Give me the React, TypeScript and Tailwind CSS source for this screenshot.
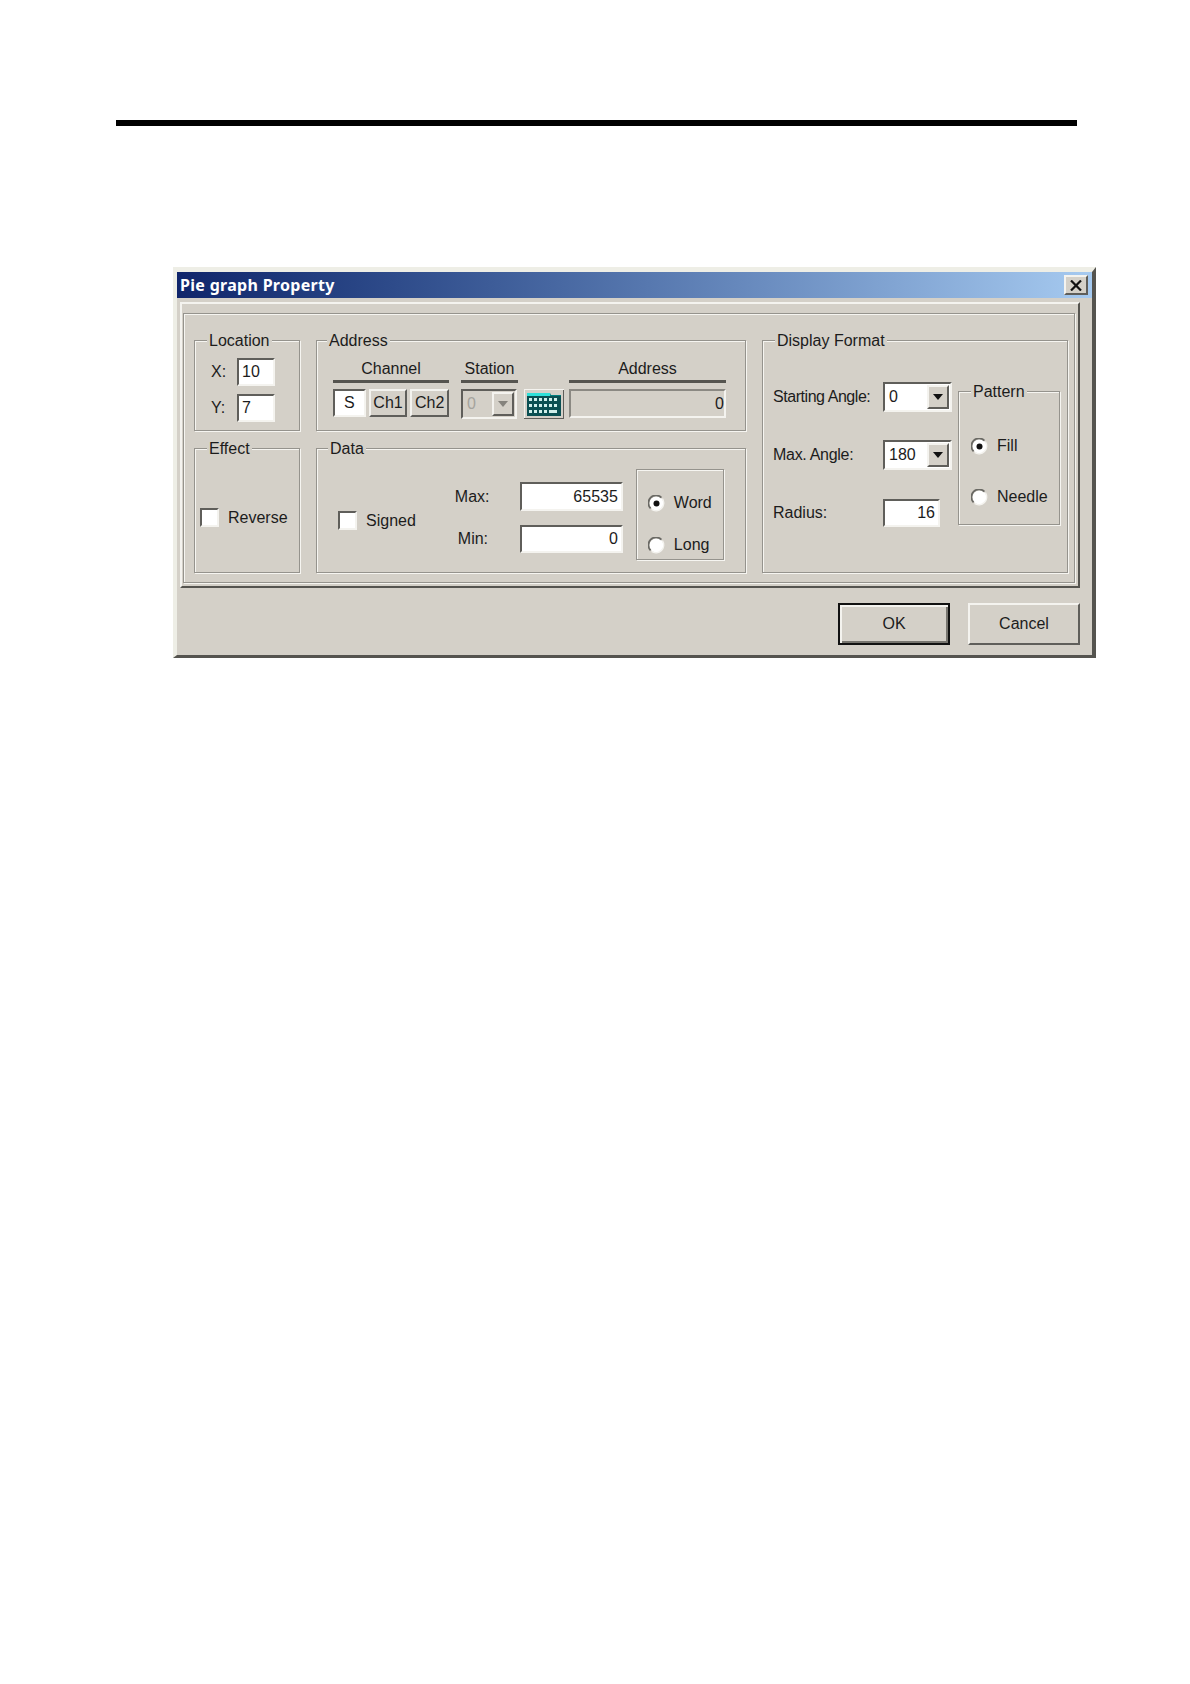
const font = "font-['Liberation_Sans',Arial,sans-serif]";
const sunken =
  'border-2 border-t-[#5f5e5a] border-l-[#5f5e5a] border-r-[#f4f3ef] border-b-[#f4f3ef] bg-white';
const etched = 'border border-[#95938d] shadow-[1px_1px_0_#f6f5f1,inset_1px_1px_0_#f6f5f1]';
const raised =
  'border-2 border-t-[#f4f3ef] border-l-[#f4f3ef] border-r-[#5f5e5a] border-b-[#5f5e5a] bg-[#d4d0c8]';

const Group = ({
  title,
  left = 12,
  className,
  children,
}: {
  title?: string;
  left?: number;
  className: string;
  children: React.ReactNode;
}) => (
  <div className={`relative ${etched} ${className}`}>
    {title && (
      <span
        className="absolute top-0 -translate-y-1/2 bg-[#d4d0c8] px-[2px] text-[16px] leading-[18px] whitespace-nowrap text-[#1c1c1c]"
        style={{ left }}
      >
        {title}
      </span>
    )}
    {children}
  </div>
);

const Field = ({ value, className, right }: { value: string; className: string; right?: boolean }) => (
  <div
    className={`${sunken} ${className} flex items-center px-[3px] text-[16px] text-[#1c1c1c] ${right ? 'justify-end' : ''}`}
  >
    {value}
  </div>
);

const Arrow = ({ disabled }: { disabled?: boolean }) => (
  <svg width="12" height="7" viewBox="0 0 12 7">
    <path d="M1 0h10L6 6z" fill={disabled ? '#85837d' : '#111'} />
  </svg>
);

const Combo = ({ value, width, disabled }: { value: string; width: string; disabled?: boolean }) => (
  <div
    className={`flex h-[30px] items-stretch border-2 border-t-[#5f5e5a] border-l-[#5f5e5a] border-r-[#f4f3ef] border-b-[#f4f3ef] ${width} ${disabled ? 'bg-[#d4d0c8]' : 'bg-white'}`}
  >
    <span className={`flex-1 pl-[4px] text-[16px] leading-[26px] ${disabled ? 'text-[#a5a39d]' : 'text-[#1c1c1c]'}`}>
      {value}
    </span>
    <span className={`${raised} my-[1px] mr-[1px] flex w-[22px] items-center justify-center`}>
      <Arrow disabled={disabled} />
    </span>
  </div>
);

const Check = ({ label, className }: { label: string; className: string }) => (
  <div className={`flex items-center gap-[9px] text-[16px] text-[#1c1c1c] ${className}`}>
    <span className={`${sunken} size-[19px]`} />
    {label}
  </div>
);

const Radio = ({ label, checked, className }: { label: string; checked?: boolean; className?: string }) => (
  <div className={`flex items-center gap-[9px] text-[16px] text-[#1c1c1c] ${className ?? ''}`}>
    <svg width="17" height="17" viewBox="0 0 17 17">
      <circle cx="8.5" cy="8.5" r="7" fill="#fff" />
      <path d="M2.6 13.4A7 7 0 0 1 13.4 2.6" fill="none" stroke="#6a6964" strokeWidth="1.8" />
      <path d="M14.4 3.6A7.8 7.8 0 0 1 3.6 14.4" fill="none" stroke="#f4f3ef" strokeWidth="1.5" />
      {checked && <circle cx="8.5" cy="8.5" r="3" fill="#111" />}
    </svg>
    {label}
  </div>
);

const Heading = ({ title, className }: { title: string; className: string }) => (
  <div className={`${className} border-b-[3px] border-b-[#55544f] text-center text-[16px] leading-[23px] text-[#1c1c1c]`}>
    {title}
  </div>
);

const ChannelButton = ({ label, className }: { label: string; className: string }) => (
  <div className={`${raised} ${className} flex h-[28px] items-center justify-center text-[16px] text-[#1c1c1c]`}>{label}</div>
);

const KeypadIcon = () => (
  <svg width="40" height="30" viewBox="0 0 40 30" className="block">
    <rect width="40" height="30" fill="#d4d0c8" />
    <path d="M0 0h40v1H0zM0 0h1v30H0z" fill="#f4f3ef" />
    <path d="M39 1h1v29H0v-1h39z" fill="#5f5e5a" />
    <path d="M3 4h23l1 2h10v21H3z" fill="#007f7f" />
    <path d="M3 4h23v3H3z" fill="#2fe0d8" />
    <path d="M3 7h34v20H3z" fill="#0a4f52" />
    <path
      d="M5 9h3v3H5zM10 9h3v3h-3zM15 9h3v3h-3zM20 9h3v3h-3zM25 9h3v3h-3zM30 9h3v3h-3zM5 15h3v3H5zM10 15h3v3h-3zM15 15h3v3h-3zM20 15h3v3h-3zM25 15h3v3h-3zM30 15h3v3h-3zM5 21h3v3H5zM10 21h3v3h-3zM15 21h3v3h-3zM20 21h3v3h-3zM25 21h8v3h-8z"
      fill="#cfeeea"
    />
  </svg>
);

const App = () => (
  <div className={`${font} h-[1684px] w-[1190px] overflow-hidden bg-white pt-[120px]`}>
    <div className="ml-[116px] h-[6px] w-[961px] bg-black" />

    <div className="mt-[141px] ml-[173px] flex h-[391px] w-[923px] flex-col border-t-[5px] border-r-[4px] border-b-[3px] border-l-[4px] border-t-[#eeeee6] border-r-[#55544f] border-b-[#55544f] border-l-[#eeeee6] bg-[#d4d0c8]">
      <div className="flex h-[26px] shrink-0 items-center justify-between bg-gradient-to-r from-[#10256b] to-[#a6caf0] pr-[4px] pl-[3px]">
        <span className="text-[16px] leading-none font-bold tracking-[0.3px] text-white font-['Noto_Sans',sans-serif]">
          Pie graph Property
        </span>
        <span className={`${raised} flex h-[20px] w-[24px] items-center justify-center`}>
          <svg width="12" height="11" viewBox="0 0 12 11">
            <path d="M1 0.5l10 10M11 0.5l-10 10" stroke="#111" strokeWidth="2.2" />
          </svg>
        </span>
      </div>

      <div className="mt-[4px] ml-[3px] flex h-[286px] w-[900px] shrink-0 flex-col border-t-2 border-r-2 border-b-2 border-l-2 border-t-[#f4f3ef] border-r-[#55544f] border-b-[#55544f] border-l-[#f4f3ef] pt-[9px] pr-[3px] pb-[3px] pl-[1px]">
        <div className={`${etched} grid flex-1 grid-cols-[106px_430px_306px] grid-rows-[91px_125px] gap-x-[16px] gap-y-[17px] pt-[26px] pl-[10px]`}>
          <Group title="Location" left={12} className="flex flex-col gap-[8px] pt-[17px] pl-[16px]">
            <div className="flex items-center text-[16px] text-[#1c1c1c]">
              <span className="w-[26px]">X:</span>
              <Field value="10" className="h-[28px] w-[38px]" />
            </div>
            <div className="flex items-center text-[16px] text-[#1c1c1c]">
              <span className="w-[26px]">Y:</span>
              <Field value="7" className="h-[28px] w-[38px]" />
            </div>
          </Group>

          <Group title="Address" left={10} className="flex pt-[16px] pl-[16px]">
            <div className="flex w-[116px] flex-col">
              <Heading title="Channel" className="w-full" />
              <div className="mt-[6px] flex gap-[3px]">
                <div
                  className={`${sunken} flex h-[28px] w-[33px] items-center justify-center bg-[#ebe9e3] text-[16px] text-[#1c1c1c]`}
                >
                  S
                </div>
                <ChannelButton label="Ch1" className="w-[39px]" />
                <ChannelButton label="Ch2" className="w-[39px]" />
              </div>
            </div>
            <div className="ml-[12px] flex w-[57px] flex-col">
              <Heading title="Station" className="w-full" />
              <div className="mt-[6px]">
                <Combo value="0" width="w-[56px]" disabled />
              </div>
            </div>
            <div className="mt-[32px] ml-[6px]">
              <KeypadIcon />
            </div>
            <div className="ml-[5px] flex w-[157px] flex-col">
              <Heading title="Address" className="w-full" />
              <div className="mt-[6px] flex h-[29px] items-center justify-end border-2 border-t-[#8b8983] border-r-[#f4f3ef] border-b-[#f4f3ef] border-l-[#8b8983] text-[16px] text-[#1c1c1c]">
                0
              </div>
            </div>
          </Group>

          <Group title="Display Format" left={12} className="row-span-2 flex pl-[10px]">
            <div className="flex w-[184px] flex-col gap-[28px] pt-[41px] text-[16px] text-[#1c1c1c]">
              <div className="flex h-[30px] items-center">
                <span className="w-[110px] tracking-[-0.45px]">Starting Angle:</span>
                <Combo value="0" width="w-[69px]" />
              </div>
              <div className="flex h-[30px] items-center">
                <span className="w-[110px] tracking-[-0.3px]">Max. Angle:</span>
                <Combo value="180" width="w-[69px]" />
              </div>
              <div className="flex h-[30px] items-center">
                <span className="w-[110px]">Radius:</span>
                <Field value="16" className="h-[28px] w-[57px]" right />
              </div>
            </div>
            <Group title="Pattern" left={12} className="mt-[50px] ml-[1px] h-[134px] w-[102px]">
              <Radio label="Fill" checked className="mt-[42px] ml-[12px]" />
              <Radio label="Needle" className="mt-[27px] ml-[12px]" />
            </Group>
          </Group>

          <Group title="Effect" left={12} className="flex items-center pt-[14px] pl-[5px]">
            <Check label="Reverse" className="" />
          </Group>

          <Group title="Data" left={11} className="flex">
            <Check label="Signed" className="mt-[20px] ml-[21px] self-center" />
            <div className="ml-[39px] flex flex-col gap-[14px] pt-[33px]">
              <div className="flex items-center text-[16px] text-[#1c1c1c]">
                <span className="w-[65px]">Max:</span>
                <Field value="65535" className="h-[29px] w-[103px]" right />
              </div>
              <div className="flex items-center text-[16px] text-[#1c1c1c]">
                <span className="w-[65px] pl-[3px]">Min:</span>
                <Field value="0" className="h-[28px] w-[103px]" right />
              </div>
            </div>
            <Group className="mt-[20px] ml-[13px] h-[91px] w-[88px] pt-[21px] pl-[11px]">
              <Radio label="Word" checked />
              <Radio label="Long" className="mt-[18px]" />
            </Group>
          </Group>
        </div>
      </div>

      <div className="mt-[15px] flex justify-end gap-[18px] pr-[12px] text-[16px] text-[#1c1c1c]">
        <div className="flex h-[42px] w-[112px] items-center justify-center border-2 border-[#111] bg-[#d4d0c8] shadow-[inset_2px_2px_0_#f4f3ef,inset_-2px_-2px_0_#77756f]">
          OK
        </div>
        <div className={`${raised} flex h-[42px] w-[112px] items-center justify-center`}>Cancel</div>
      </div>
    </div>
  </div>
);

export default App;
